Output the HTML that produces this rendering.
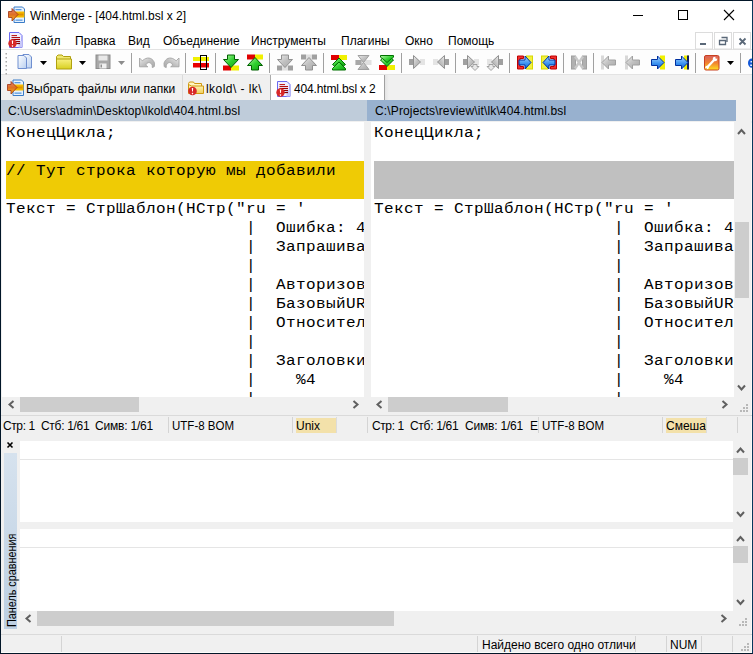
<!DOCTYPE html>
<html><head><meta charset="utf-8">
<style>
*{margin:0;padding:0;box-sizing:border-box}
html,body{width:753px;height:654px;overflow:hidden;background:#f0f0f0}
body{position:relative;font-family:"Liberation Sans",sans-serif;font-size:12px;color:#000}
.a{position:absolute}
.t{position:absolute;white-space:pre;line-height:14px}
.ml{position:absolute;font-family:"Liberation Mono",monospace;font-size:16px;letter-spacing:0.4px;transform:scaleY(0.86);transform-origin:0 14px;white-space:pre;line-height:19px;height:19px}
svg{position:absolute;overflow:visible}
</style></head><body>
<!-- window border -->
<div class="a" style="left:0;top:0;width:753px;height:654px;border:1px solid #021628;border-right-color:#07385c"></div><div class="a" style="left:751px;top:1px;width:1px;height:652px;background:#fbf9f7"></div><div class="a" style="left:1px;top:652px;width:751px;height:1px;background:#fcfcfa"></div>
<!-- title bar -->
<div class="a" style="left:1px;top:1px;width:751px;height:30px;background:#fff"></div>
<div class="t" style="left:30px;top:9px">WinMerge - [404.html.bsl x 2]</div>
<!-- menu bar -->
<div class="a" style="left:1px;top:31px;width:751px;height:18px;background:#fff"></div>
<div class="t" style="left:31px;top:34px">Файл</div>
<div class="t" style="left:75px;top:34px">Правка</div>
<div class="t" style="left:128px;top:34px">Вид</div>
<div class="t" style="left:163px;top:34px">Объединение</div>
<div class="t" style="left:251px;top:34px">Инструменты</div>
<div class="t" style="left:341px;top:34px">Плагины</div>
<div class="t" style="left:405px;top:34px">Окно</div>
<div class="t" style="left:448px;top:34px">Помощь</div>
<!-- toolbar -->
<div class="a" style="left:1px;top:49px;width:751px;height:1px;background:#e3e3e3"></div>
<div class="a" style="left:1px;top:50px;width:751px;height:24px;background:#fdfdfd"></div>
<div class="a" style="left:1px;top:74px;width:751px;height:1px;background:#e3e3e3"></div>
<!-- tab bar -->
<div class="a" style="left:1px;top:75px;width:751px;height:25px;background:#f0f0f0"></div>
<div class="a" style="left:270px;top:75px;width:115px;height:25px;background:#fff;border-left:1px solid #acacac;border-right:1px solid #a0a0a0"></div><div class="a" style="left:385px;top:75px;width:4px;height:25px;background:linear-gradient(90deg,#e4e4e4,#f0f0f0)"></div>
<div class="t" style="left:26px;top:82px">Выбрать файлы или папки</div>
<div class="a" style="left:182px;top:75px;width:1px;height:25px;background:#dadada"></div>
<div class="t" style="left:206px;top:82px;letter-spacing:0.45px">lkold\ - lk\</div>
<div class="t" style="left:294px;top:82px;letter-spacing:-0.15px">404.html.bsl x 2</div>
<!-- path headers -->
<div class="a" style="left:1px;top:100px;width:366px;height:21px;background:#bfccda"></div>
<div class="t" style="left:8px;top:104px;letter-spacing:0.15px">C:\Users\admin\Desktop\lkold\404.html.bsl</div>
<div class="a" style="left:367px;top:100px;width:369px;height:21px;background:#98b1cf"></div>
<div class="t" style="left:375px;top:104px;letter-spacing:0.14px">C:\Projects\review\it\lk\404.html.bsl</div>
<!-- editors -->
<div class="a" style="left:1px;top:121px;width:751px;height:2px;background:#f0f0f0"></div>
<div class="a" style="left:2px;top:122px;width:362px;height:275px;background:#fff;overflow:hidden">
  <div class="a" style="left:4px;top:39px;width:400px;height:38px;background:#efcb05"></div>
  <div class="ml" style="left:4px;top:2px">КонецЦикла;</div>
<div class="ml" style="left:4px;top:40px;-webkit-text-stroke-color:#efcb05">// Тут строка которую мы добавили</div>
<div class="ml" style="left:4px;top:78px">Текст = СтрШаблон(НСтр(&quot;ru = &#x27;</div>
<div class="ml" style="left:4px;top:97px">                        |  Ошибка: 4</div>
<div class="ml" style="left:4px;top:116px">                        |  Запрашива</div>
<div class="ml" style="left:4px;top:135px">                        |</div>
<div class="ml" style="left:4px;top:154px">                        |  Авторизов</div>
<div class="ml" style="left:4px;top:173px">                        |  БазовыйUR</div>
<div class="ml" style="left:4px;top:192px">                        |  Относител</div>
<div class="ml" style="left:4px;top:211px">                        |</div>
<div class="ml" style="left:4px;top:230px">                        |  Заголовки</div>
<div class="ml" style="left:4px;top:249px">                        |    %4</div>
<div class="ml" style="left:4px;top:268px">                        |</div>
</div>
<div class="a" style="left:371px;top:122px;width:363px;height:275px;background:#fff;overflow:hidden">
  <div class="a" style="left:3px;top:39px;width:400px;height:38px;background:#c0c0c0"></div>
  <div class="ml" style="left:3px;top:2px">КонецЦикла;</div>
<div class="ml" style="left:3px;top:78px">Текст = СтрШаблон(НСтр(&quot;ru = &#x27;</div>
<div class="ml" style="left:3px;top:97px">                        |  Ошибка: 4</div>
<div class="ml" style="left:3px;top:116px">                        |  Запрашива</div>
<div class="ml" style="left:3px;top:135px">                        |</div>
<div class="ml" style="left:3px;top:154px">                        |  Авторизов</div>
<div class="ml" style="left:3px;top:173px">                        |  БазовыйUR</div>
<div class="ml" style="left:3px;top:192px">                        |  Относител</div>
<div class="ml" style="left:3px;top:211px">                        |</div>
<div class="ml" style="left:3px;top:230px">                        |  Заголовки</div>
<div class="ml" style="left:3px;top:249px">                        |    %4</div>
<div class="ml" style="left:3px;top:268px">                        |</div>
</div>
<!-- right vscroll -->
<div class="a" style="left:734px;top:122px;width:17px;height:275px;background:#f0f0f0"></div>
<div class="a" style="left:735px;top:222px;width:14px;height:76px;background:#cdcdcd"></div>
<!-- hscrolls -->
<div class="a" style="left:20px;top:397px;width:119px;height:15px;background:#cdcdcd"></div>
<div class="a" style="left:388px;top:397px;width:120px;height:15px;background:#cdcdcd"></div>
<div class="a" style="left:1px;top:415px;width:751px;height:1px;background:#dadada"></div>
<!-- status bars -->
<div class="t" style="left:3px;top:419px;letter-spacing:-0.4px">Стр: 1</div><div class="t" style="left:41px;top:419px;letter-spacing:-0.3px">Стб: 1/61</div><div class="t" style="left:95px;top:419px;letter-spacing:-0.2px">Симв: 1/61</div>
<div class="a" style="left:168px;top:417px;width:1px;height:16px;background:#d4d4d4"></div>
<div class="t" style="left:172px;top:419px;transform:scaleX(0.96);transform-origin:0 0">UTF-8 BOM</div>
<div class="a" style="left:292px;top:417px;width:1px;height:16px;background:#d4d4d4"></div>
<div class="a" style="left:296px;top:418px;width:40px;height:15px;background:#f3e1aa"></div><div class="a" style="left:336px;top:417px;width:1px;height:16px;background:#dcdcdc"></div>
<div class="t" style="left:296px;top:419px">Unix</div>
<div class="a" style="left:367px;top:417px;width:1px;height:16px;background:#d4d4d4"></div>
<div class="t" style="left:372px;top:419px;letter-spacing:-0.4px">Стр: 1</div><div class="t" style="left:410px;top:419px;letter-spacing:-0.3px">Стб: 1/61</div><div class="t" style="left:465px;top:419px;letter-spacing:-0.2px">Симв: 1/61</div><div class="t" style="left:530px;top:419px;width:8px;overflow:hidden">EOL</div>
<div class="a" style="left:538px;top:417px;width:1px;height:16px;background:#d4d4d4"></div>
<div class="t" style="left:542px;top:419px;transform:scaleX(0.96);transform-origin:0 0">UTF-8 BOM</div>
<div class="a" style="left:662px;top:417px;width:1px;height:16px;background:#d4d4d4"></div>
<div class="a" style="left:666px;top:418px;width:40px;height:15px;background:#f3e1aa"></div><div class="a" style="left:706px;top:417px;width:1px;height:16px;background:#dcdcdc"></div>
<div class="t" style="left:666px;top:419px;width:40px;overflow:hidden">Смешанный</div>
<div class="a" style="left:737px;top:417px;width:1px;height:16px;background:#d4d4d4"></div>
<!-- diff panes -->
<div class="a" style="left:20px;top:441px;width:714px;height:81px;background:#fff"></div>
<div class="a" style="left:20px;top:459px;width:714px;height:1px;background:#e5e5e5"></div>
<div class="a" style="left:20px;top:529px;width:714px;height:82px;background:#fff"></div>
<div class="a" style="left:20px;top:547px;width:714px;height:1px;background:#e5e5e5"></div>
<div class="a" style="left:4px;top:453px;width:13px;height:176px;background:linear-gradient(#d6e2ee,#bccfe2)"></div>
<div class="t" style="left:5px;top:627px;transform:rotate(-90deg) scaleX(0.9);transform-origin:0 0">Панель сравнения</div>
<div class="a" style="left:37px;top:611px;width:357px;height:15px;background:#cdcdcd"></div>
<div class="a" style="left:733px;top:441px;width:15px;height:82px;background:#f0f0f0"></div>
<div class="a" style="left:733px;top:458px;width:15px;height:17px;background:#cdcdcd"></div>
<div class="a" style="left:733px;top:529px;width:15px;height:82px;background:#f0f0f0"></div>
<div class="a" style="left:733px;top:546px;width:15px;height:17px;background:#cdcdcd"></div>
<!-- bottom status -->
<div class="a" style="left:1px;top:634px;width:751px;height:1px;background:#dadada"></div>
<div class="a" style="left:61px;top:636px;width:1px;height:16px;background:#d4d4d4"></div>
<div class="a" style="left:477px;top:636px;width:1px;height:16px;background:#d4d4d4"></div>
<div class="t" style="left:482px;top:638px;width:153px;overflow:hidden">Найдено всего одно отличие</div>
<div class="a" style="left:635px;top:636px;width:1px;height:16px;background:#d4d4d4"></div>
<div class="a" style="left:666px;top:636px;width:1px;height:16px;background:#d4d4d4"></div>
<div class="t" style="left:670px;top:638px">NUM</div>
<div class="a" style="left:701px;top:636px;width:1px;height:16px;background:#d4d4d4"></div>
<div class="a" style="left:732px;top:636px;width:1px;height:16px;background:#d4d4d4"></div>
<svg style="left:0;top:0" width="753" height="654"><defs>
<linearGradient id="gGreen" x1="0" y1="0" x2="1" y2="1"><stop offset="0" stop-color="#b8f8a8"/><stop offset="0.5" stop-color="#30d030"/><stop offset="1" stop-color="#10a010"/></linearGradient>
<linearGradient id="gGray" x1="0" y1="0" x2="1" y2="1"><stop offset="0" stop-color="#ececec"/><stop offset="0.5" stop-color="#c0c0c0"/><stop offset="1" stop-color="#a8a8a8"/></linearGradient>
<linearGradient id="gBlue" x1="0" y1="0" x2="0" y2="1"><stop offset="0" stop-color="#a8d8ff"/><stop offset="0.6" stop-color="#3890f0"/><stop offset="1" stop-color="#1060d0"/></linearGradient>
<linearGradient id="gPage" x1="0" y1="0" x2="1" y2="1"><stop offset="0" stop-color="#ffffff"/><stop offset="1" stop-color="#b8cff0"/></linearGradient>
<linearGradient id="gWrench" x1="0" y1="0" x2="0" y2="1"><stop offset="0" stop-color="#d86060"/><stop offset="0.5" stop-color="#f08030"/><stop offset="1" stop-color="#ffe020"/></linearGradient>
<linearGradient id="gArrowO" x1="0" y1="0" x2="0" y2="1"><stop offset="0" stop-color="#e08070"/><stop offset="0.5" stop-color="#e07020"/><stop offset="1" stop-color="#f8c020"/></linearGradient>
<linearGradient id="gFolder" x1="0" y1="0" x2="0" y2="1"><stop offset="0" stop-color="#fff8c0"/><stop offset="1" stop-color="#f0d060"/></linearGradient>
<linearGradient id="gYFolder" x1="0" y1="0" x2="0" y2="1"><stop offset="0" stop-color="#f8f080"/><stop offset="1" stop-color="#d8d020"/></linearGradient>
</defs><g transform="translate(8.5,6.5)"><path d="M5.5,0.5 h8.5 l2,2 v13.5 h-10.5 z" fill="#e8f2fc" stroke="#3a7cc8"/><rect x="7" y="2.5" width="6" height="1.3" fill="#5a9ae0"/><rect x="7" y="13" width="7" height="1.3" fill="#5a9ae0"/><rect x="6" y="5" width="10" height="6" fill="#f5b800"/><rect x="8" y="7" width="7" height="2" fill="#e09000"/><path d="M0,5 h3.5 v-3 l6,6 l-6,6.5 v-3.5 h-3.5 z" fill="url(#gArrowO)" stroke="#a03010" stroke-width="0.8"/></g><g transform="translate(9,32)"><path d="M0.5,0.5 h9.5 l3,3 v12 h-12.5 z" fill="#f0f0ff" stroke="#6a6af0"/><rect x="9.5" y="9" width="3.5" height="6.5" fill="#c8c8f8"/><rect x="2.5" y="3" width="5.5" height="1.1" fill="#c02020"/><rect x="2.5" y="5" width="8.5" height="1.1" fill="#b01010"/><rect x="2.5" y="7" width="8.5" height="1.1" fill="#a00000"/><rect x="2.5" y="9" width="8.5" height="1.1" fill="#900000"/><rect x="2.5" y="11" width="8.5" height="1.1" fill="#800000"/><circle cx="3.5" cy="11.5" r="4.2" fill="#d82828"/><path d="M2.8,8.5 h1.4 l-0.3,3.6 h-0.8 z M3.5,13.2 a0.75,0.75 0 1 0 0.01,0 z" fill="#fff"/></g><rect x="5.5" y="53" width="1.5" height="1.5" fill="#a8a8a8"/><rect x="5.5" y="57" width="1.5" height="1.5" fill="#a8a8a8"/><rect x="5.5" y="61" width="1.5" height="1.5" fill="#a8a8a8"/><rect x="5.5" y="65" width="1.5" height="1.5" fill="#a8a8a8"/><rect x="5.5" y="69" width="1.5" height="1.5" fill="#a8a8a8"/><rect x="5.5" y="73" width="1.5" height="1.5" fill="#a8a8a8"/><g transform="translate(17.5,54)"><path d="M5.5,0.5 h6 l2.5,2.5 v11 h-8.5 z" fill="url(#gPage)" stroke="#6f8fd0"/><path d="M0.5,1.5 h6 l2.5,2.5 v10.5 h-8.5 z" fill="url(#gPage)" stroke="#6f8fd0"/></g><path d="M40,61 h7 l-3.5,4 z" fill="#000"/><g transform="translate(56,54.5)"><path d="M0.5,2 l1.5,-1.5 h4 l1.5,1.5 h7 v3 h-14 z" fill="#f0e870" stroke="#b0a010"/><path d="M0.5,4.5 h15 v10 h-15 z" fill="url(#gYFolder)" stroke="#b0a010"/></g><path d="M79,61 h7 l-3.5,4 z" fill="#000"/><g transform="translate(95.5,54.5)"><rect x="0.5" y="0.5" width="14" height="13.5" fill="#a8a8a8" stroke="#8c8c8c"/><rect x="3" y="1" width="9" height="5" fill="#e8e8e8"/><rect x="4" y="9" width="7" height="5" fill="#f0f0f0"/><rect x="5" y="10" width="1.5" height="3" fill="#909090"/></g><path d="M118,61 h7 l-3.5,4 z" fill="#8c8c8c"/><rect x="131" y="53" width="1" height="20" fill="#a0a0a0"/><g transform="translate(139,57)"><path d="M0.5,1 L0.5,9.8 L8.8,9.8 L6.8,8.2 C7.8,4.8 11.8,4.6 13.2,8.2 L13.3,10.6 L15.3,9.6 L15.5,6.2 C14.2,1.6 9.6,-0.6 5.2,2.4 L3.3,3.8 Z" fill="url(#gGray)" stroke="#a4a4a4" stroke-width="0.9"/></g><g transform="translate(163.5,57)"><g transform="translate(16,0) scale(-1,1)"><path d="M0.5,1 L0.5,9.8 L8.8,9.8 L6.8,8.2 C7.8,4.8 11.8,4.6 13.2,8.2 L13.3,10.6 L15.3,9.6 L15.5,6.2 C14.2,1.6 9.6,-0.6 5.2,2.4 L3.3,3.8 Z" fill="url(#gGray)" stroke="#a4a4a4" stroke-width="0.9"/></g></g><rect x="185" y="53" width="1" height="20" fill="#a0a0a0"/><g transform="translate(193,54)"><rect x="0" y="3" width="16" height="4" fill="#f0f000"/><rect x="0" y="9" width="16" height="4.5" fill="#e80000"/><rect x="7.5" y="1.5" width="6" height="14" fill="none" stroke="#000" stroke-width="1"/></g><rect x="215" y="53" width="1" height="20" fill="#a0a0a0"/><g transform="translate(223,54.5)"><rect x="0" y="11" width="8" height="5" fill="#e00000"/><rect x="8" y="11" width="8" height="5" fill="#f0f000"/><path d="M4.5,0.5 h7 v4.5 h4 l-7.5,8 l-7.5,-8 h4 z" fill="url(#gGreen)" stroke="#006000"/></g><g transform="translate(247,54.5)"><rect x="0" y="0" width="8" height="5" fill="#e00000"/><rect x="8" y="0" width="8" height="5" fill="#f0f000"/><path d="M8,3 l7.5,8 h-4 v4.5 h-7 v-4.5 h-4 z" fill="url(#gGreen)" stroke="#006000"/></g><rect x="269" y="53" width="1" height="20" fill="#a0a0a0"/><g transform="translate(277,54.5)"><rect x="0" y="11" width="5" height="5" fill="#a0a0a0"/><rect x="5" y="11" width="6" height="5" fill="#e0e0e0"/><rect x="11" y="11" width="5" height="5" fill="#a0a0a0"/><path d="M4.5,0.5 h7 v4.5 h4 l-7.5,8 l-7.5,-8 h4 z" fill="url(#gGray)" stroke="#909090"/></g><g transform="translate(301,54.5)"><rect x="0" y="0" width="5" height="5" fill="#a0a0a0"/><rect x="5" y="0" width="6" height="5" fill="#e0e0e0"/><rect x="11" y="0" width="5" height="5" fill="#a0a0a0"/><path d="M8,3 l7.5,8 h-4 v4.5 h-7 v-4.5 h-4 z" fill="url(#gGray)" stroke="#909090"/></g><rect x="323" y="53" width="1" height="20" fill="#a0a0a0"/><g transform="translate(331,55)"><rect x="0" y="0" width="8" height="5" fill="#e00000"/><rect x="8" y="0" width="8" height="5" fill="#f0f000"/><path d="M8,7 l6.5,6.5 v1.5 h-13 v-1.5 z" fill="url(#gGreen)" stroke="#007000"/><path d="M8,3 l6.5,6.5 l-2,1.5 l-4.5,-4 l-4.5,4 l-2,-1.5 z" fill="url(#gGreen)" stroke="#007000"/></g><g transform="translate(355.5,55)"><rect x="0" y="5" width="16" height="5" fill="#e0e0e0"/><rect x="0" y="5" width="6" height="5" fill="#a8a8a8"/><path d="M2.5,0.5 h11 l-5.5,7 z" fill="url(#gGray)" stroke="#a0a0a0"/><path d="M2.5,14.5 h11 l-5.5,-7 z" fill="url(#gGray)" stroke="#a0a0a0"/></g><g transform="translate(379,55)"><rect x="0" y="10" width="8" height="5" fill="#e00000"/><rect x="8" y="10" width="8" height="5" fill="#f0f000"/><path d="M1.5,0.5 h13 v1.5 l-6.5,6.5 l-6.5,-6.5 z" fill="url(#gGreen)" stroke="#007000"/><path d="M1.5,5 l2,-1.5 l4.5,4 l4.5,-4 l2,1.5 l-6.5,6.5 z" fill="url(#gGreen)" stroke="#007000"/></g><rect x="401" y="53" width="1" height="20" fill="#a0a0a0"/><g transform="translate(409,55)"><rect x="0" y="4" width="4.5" height="6" fill="#a0a0a0"/><rect x="11" y="4" width="5" height="6" fill="#e4e4e4"/><path d="M4.5,0.5 l7,6.5 l-7,6.5 z" fill="url(#gGray)" stroke="#909090"/></g><g transform="translate(433,55)"><g transform="translate(16,0) scale(-1,1)"><rect x="0" y="4" width="4.5" height="6" fill="#a0a0a0"/><rect x="11" y="4" width="5" height="6" fill="#e4e4e4"/><path d="M4.5,0.5 l7,6.5 l-7,6.5 z" fill="url(#gGray)" stroke="#909090"/></g></g><rect x="455" y="53" width="1" height="20" fill="#a0a0a0"/><g transform="translate(463,55)"><rect x="0" y="4" width="4.5" height="6" fill="#a0a0a0"/><rect x="11" y="4" width="5" height="6" fill="#e4e4e4"/><path d="M4.5,0.5 l7,6.5 l-7,6.5 z" fill="url(#gGray)" stroke="#909090"/><path d="M10,9.5 h4 v2 h2 l-4,4 l-4,-4 h2 z" fill="#e8e8e8" stroke="#909090" stroke-width="0.8"/></g><g transform="translate(487,55)"><g transform="translate(16,0) scale(-1,1)"><rect x="0" y="4" width="4.5" height="6" fill="#a0a0a0"/><rect x="11" y="4" width="5" height="6" fill="#e4e4e4"/><path d="M4.5,0.5 l7,6.5 l-7,6.5 z" fill="url(#gGray)" stroke="#909090"/><path d="M10,9.5 h4 v2 h2 l-4,4 l-4,-4 h2 z" fill="#e8e8e8" stroke="#909090" stroke-width="0.8"/></g></g><rect x="509" y="53" width="1" height="20" fill="#a0a0a0"/><g transform="translate(517,55.5)"><path d="M0.5,0.5 h6 v2.5 h-3.5 v8 h3.5 v2.5 h-6 z" fill="#f03030" stroke="#c00000"/><rect x="9.5" y="0.5" width="6" height="13" fill="#f0f040" stroke="#d8d800"/><path d="M2,4.5 h6 v-4 l6,6.5 l-6,6.5 v-4 h-6 z" fill="url(#gBlue)" stroke="#0030a0"/></g><g transform="translate(541,55.5)"><g transform="translate(16,0) scale(-1,1)"><path d="M0.5,0.5 h6 v2.5 h-3.5 v8 h3.5 v2.5 h-6 z" fill="#f03030" stroke="#c00000"/><rect x="9.5" y="0.5" width="6" height="13" fill="#f0f040" stroke="#d8d800"/><path d="M2,4.5 h6 v-4 l6,6.5 l-6,6.5 v-4 h-6 z" fill="url(#gBlue)" stroke="#0030a0"/></g></g><rect x="563" y="53" width="1" height="20" fill="#a0a0a0"/><g transform="translate(571,55.5)"><rect x="0.5" y="0.5" width="4" height="13" fill="#b0b0b0" stroke="#a0a0a0"/><rect x="11.5" y="0.5" width="4" height="13" fill="#b0b0b0" stroke="#a0a0a0"/><path d="M4,1 l8,12 M12,1 l-8,12" stroke="#c8c8c8" stroke-width="2.5"/></g><rect x="593" y="53" width="1" height="20" fill="#a0a0a0"/><g transform="translate(601,55.5)"><rect x="0" y="0" width="3" height="14" fill="#d8d8d8"/><path d="M7.5,0.5 v4 h7 v5 h-7 v4 l-6.5,-6.5 z" fill="url(#gGray)" stroke="#a0a0a0"/></g><g transform="translate(625,55.5)"><rect x="0" y="0" width="3" height="14" fill="#d8d8d8"/><path d="M7.5,0.5 v4 h7 v5 h-7 v4 l-6.5,-6.5 z" fill="url(#gGray)" stroke="#a0a0a0"/></g><g transform="translate(651,55.5)"><rect x="9" y="0" width="5" height="14" fill="#f0f000"/><path d="M0.5,4 h6 v-3.5 l6.5,6.5 l-6.5,6.5 v-3.5 h-6 z" fill="url(#gBlue)" stroke="#0030a0"/></g><g transform="translate(675,55.5)"><rect x="9" y="0" width="5" height="14" fill="#f0f000"/><rect x="12" y="0" width="2" height="14" fill="#102060"/><path d="M0.5,4 h6 v-3.5 l6.5,6.5 l-6.5,6.5 v-3.5 h-6 z" fill="url(#gBlue)" stroke="#0030a0"/></g><rect x="695" y="53" width="1" height="20" fill="#a0a0a0"/><g transform="translate(704,55)"><rect x="0.5" y="0.5" width="14.5" height="14.5" rx="1.5" fill="url(#gWrench)" stroke="#c84020"/><path d="M3,12.5 L10.5,4.5" stroke="#fff" stroke-width="2.2" stroke-linecap="round"/><circle cx="11" cy="4" r="2.3" fill="#fff"/><circle cx="12.3" cy="2.7" r="1" fill="#e87050"/><circle cx="3" cy="12.5" r="1.8" fill="#fff"/><circle cx="2" cy="13.5" r="0.8" fill="#f0b030"/></g><path d="M727,61 h7 l-3.5,4 z" fill="#000"/><rect x="740" y="53" width="1" height="20" fill="#a0a0a0"/><path d="M752,58.5 c-2.5,0 -4,2 -4,4.5 c0,2.5 1.5,4.8 4,4.8 z" fill="#1458d8"/><path d="M752,61 h-1.5 v1.5 h1.5 z M752,64.5 h-1.8 v1.5 h1.8 z" fill="#e8f0ff"/><g transform="translate(7.5,79.5)"><path d="M5.5,0.5 h8.5 l2,2 v13.5 h-10.5 z" fill="#e8f2fc" stroke="#3a7cc8"/><rect x="7" y="2.5" width="6" height="1.3" fill="#5a9ae0"/><rect x="7" y="13" width="7" height="1.3" fill="#5a9ae0"/><rect x="6" y="5" width="10" height="6" fill="#f5b800"/><rect x="8" y="7" width="7" height="2" fill="#e09000"/><path d="M0,5 h3.5 v-3 l6,6 l-6,6.5 v-3.5 h-3.5 z" fill="url(#gArrowO)" stroke="#a03010" stroke-width="0.8"/></g><g transform="translate(188,81.5)"><path d="M0.5,2 l1,-1.5 h4 l1,1.5 h7 v3 h-13 z" fill="#fff6c0" stroke="#d09810"/><path d="M0.5,3 v9 h15 v-7.5 h-12 z" fill="url(#gFolder)" stroke="#d09810"/><circle cx="4.5" cy="9.5" r="4.3" fill="#d82828"/><path d="M3.8,6.5 h1.4 l-0.3,3.6 h-0.8 z M4.5,11.2 a0.75,0.75 0 1 0 0.01,0 z" fill="#fff"/></g><g transform="translate(277,81)"><path d="M0.5,0.5 h9.5 l3,3 v12 h-12.5 z" fill="#f0f0ff" stroke="#6a6af0"/><rect x="9.5" y="9" width="3.5" height="6.5" fill="#c8c8f8"/><rect x="2.5" y="3" width="5.5" height="1.1" fill="#c02020"/><rect x="2.5" y="5" width="8.5" height="1.1" fill="#b01010"/><rect x="2.5" y="7" width="8.5" height="1.1" fill="#a00000"/><rect x="2.5" y="9" width="8.5" height="1.1" fill="#900000"/><rect x="2.5" y="11" width="8.5" height="1.1" fill="#800000"/><circle cx="3.5" cy="11.5" r="4.2" fill="#d82828"/><path d="M2.8,8.5 h1.4 l-0.3,3.6 h-0.8 z M3.5,13.2 a0.75,0.75 0 1 0 0.01,0 z" fill="#fff"/></g><rect x="633" y="15" width="10" height="1" fill="#000"/><rect x="678.5" y="10.5" width="9" height="9" fill="none" stroke="#000"/><path d="M724,10 l10,10 M734,10 l-10,10" stroke="#000" stroke-width="1.1"/><rect x="695.5" y="32.5" width="17" height="16.5" fill="#fff" stroke="#dcdcdc"/><rect x="714.5" y="32.5" width="17" height="16.5" fill="#fff" stroke="#dcdcdc"/><rect x="733.5" y="32.5" width="17" height="16.5" fill="#fff" stroke="#dcdcdc"/><rect x="700" y="43" width="6" height="2" fill="#5a6878"/><path d="M721.5,37.5 h5.5 v4.5 M719.5,40.5 h6 v4 h-6 z" fill="none" stroke="#5a6878" stroke-width="1.3"/><path d="M739.5,38.5 l6,6 M745.5,38.5 l-6,6" stroke="#5a6878" stroke-width="1.8"/><path d="M13.5,401 l-4,3.5 l4,3.5" fill="none" stroke="#606060" stroke-width="2"/><path d="M353.5,401 l4,3.5 l-4,3.5" fill="none" stroke="#606060" stroke-width="2"/><path d="M381.5,401 l-4,3.5 l4,3.5" fill="none" stroke="#606060" stroke-width="2"/><path d="M722.5,401 l4,3.5 l-4,3.5" fill="none" stroke="#606060" stroke-width="2"/><path d="M738,134.0 l3.5,-4 l3.5,4" fill="none" stroke="#606060" stroke-width="2"/><path d="M738,385.5 l3.5,4 l3.5,-4" fill="none" stroke="#606060" stroke-width="2"/><rect x="746" y="410" width="2" height="2" fill="#b8b8b8"/><rect x="743" y="410" width="2" height="2" fill="#b8b8b8"/><rect x="740" y="410" width="2" height="2" fill="#b8b8b8"/><rect x="746" y="407" width="2" height="2" fill="#b8b8b8"/><rect x="743" y="407" width="2" height="2" fill="#b8b8b8"/><rect x="746" y="404" width="2" height="2" fill="#b8b8b8"/><path d="M737,452.5 l3.5,-4 l3.5,4" fill="none" stroke="#606060" stroke-width="2"/><path d="M737,512 l3.5,4 l3.5,-4" fill="none" stroke="#606060" stroke-width="2"/><path d="M737,541.0 l3.5,-4 l3.5,4" fill="none" stroke="#606060" stroke-width="2"/><path d="M737,600 l3.5,4 l3.5,-4" fill="none" stroke="#606060" stroke-width="2"/><path d="M30.5,615 l-4,3.5 l4,3.5" fill="none" stroke="#606060" stroke-width="2"/><path d="M721.5,615 l4,3.5 l-4,3.5" fill="none" stroke="#606060" stroke-width="2"/><rect x="745" y="624" width="2" height="2" fill="#b8b8b8"/><rect x="742" y="624" width="2" height="2" fill="#b8b8b8"/><rect x="739" y="624" width="2" height="2" fill="#b8b8b8"/><rect x="745" y="621" width="2" height="2" fill="#b8b8b8"/><rect x="742" y="621" width="2" height="2" fill="#b8b8b8"/><rect x="745" y="618" width="2" height="2" fill="#b8b8b8"/><rect x="747" y="649" width="2" height="2" fill="#b8b8b8"/><rect x="744" y="649" width="2" height="2" fill="#b8b8b8"/><rect x="741" y="649" width="2" height="2" fill="#b8b8b8"/><rect x="747" y="646" width="2" height="2" fill="#b8b8b8"/><rect x="744" y="646" width="2" height="2" fill="#b8b8b8"/><rect x="747" y="643" width="2" height="2" fill="#b8b8b8"/><path d="M7.5,442.5 l5,5 M12.5,442.5 l-5,5" stroke="#000" stroke-width="1.6"/></svg>
</body></html>
